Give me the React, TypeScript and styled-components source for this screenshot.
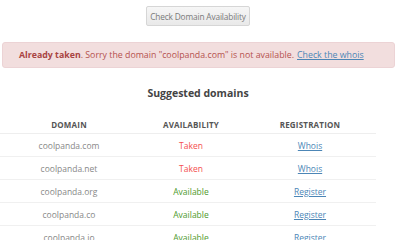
import React from "react";
import styled, { createGlobalStyle } from "styled-components";

const Global = createGlobalStyle`
  html, body { margin: 0; padding: 0; background: #fff; }
  body { font-family: "Open Sans", "Liberation Sans", sans-serif; }
`;

const Page = styled.div`
  width: 400px;
  height: 240px;
  overflow: hidden;
`;

const ButtonRow = styled.div`
  display: flex;
  justify-content: center;
  padding: 6px 6px 0 2px;
`;

const CheckButton = styled.button`
  font-family: inherit;
  font-size: 8.3px;
  letter-spacing: -0.15px;
  color: #7a7a7a;
  height: 20px;
  width: 104px;
  padding: 0;
  border: 1px solid #d6d6d6;
  border-radius: 2px;
  background: linear-gradient(#f6f6f6, #e9e9e9);
`;

const Alert = styled.div`
  margin: 16px 5px 0 2px;
  height: 26px;
  box-sizing: border-box;
  background: #f2dede;
  border: 1px solid #ecd3d5;
  border-radius: 3px;
  color: #b5524f;
  font-size: 8.8px;
  display: flex;
  align-items: center;
  padding-left: 16px;
  white-space: nowrap;
  strong { font-weight: 700; color: #a94442; }
`;

const AlertLink = styled.a`
  color: #4c86b6;
  text-decoration: underline;
  margin-left: 3px;
`;

const Heading = styled.h3`
  margin: 18px 0 0 0;
  padding-right: 4px;
  text-align: center;
  font-size: 10.5px;
  font-weight: 700;
  color: #444;
  line-height: 14px;
`;

const Table = styled.table`
  margin-top: 19px;
  width: 376px;
  border-collapse: collapse;
  table-layout: fixed;
  font-size: 8px;
`;

const Th = styled.th<{ $w: number }>`
  width: ${(p) => p.$w}px;
  font-weight: 700;
  color: #555;
  text-transform: uppercase;
  letter-spacing: 0.2px;
  height: 14px;
  padding: 0;
  vertical-align: top;
  line-height: 12px;
  border-bottom: 1px solid #eee;
  text-align: center;
`;

const Td = styled.td<{ $tone?: "muted" | "taken" | "ok" }>`
  height: 22px;
  padding: 0;
  text-align: center;
  border-bottom: 1px solid #f0f0f0;
  font-size: 8.5px;
  color: ${(p) =>
    p.$tone === "taken" ? "#f45050" : p.$tone === "ok" ? "#4e9a2e" : "#888"};
`;

const CellLink = styled.a`
  color: #4c86b6;
  text-decoration: underline;
`;

const rows = [
  { d: "coolpanda.com", taken: true },
  { d: "coolpanda.net", taken: true },
  { d: "coolpanda.org", taken: false },
  { d: "coolpanda.co", taken: false },
  { d: "coolpanda.io", taken: false },
];

export default function App() {
  return (
    <Page>
      <Global />
      <ButtonRow>
        <CheckButton>Check Domain Availability</CheckButton>
      </ButtonRow>
      <Alert>
        <strong>Already taken</strong>. Sorry the domain "coolpanda.com" is not available.
        <AlertLink href="#">Check the whois</AlertLink>
      </Alert>
      <Heading>Suggested domains</Heading>
      <Table>
        <thead>
          <tr>
            <Th $w={138}>Domain</Th>
            <Th $w={106}>Availability</Th>
            <Th $w={132}>Registration</Th>
          </tr>
        </thead>
        <tbody>
          {rows.map((r) => (
            <tr key={r.d}>
              <Td $tone="muted">{r.d}</Td>
              <Td $tone={r.taken ? "taken" : "ok"}>{r.taken ? "Taken" : "Available"}</Td>
              <Td>
                <CellLink href="#">{r.taken ? "Whois" : "Register"}</CellLink>
              </Td>
            </tr>
          ))}
        </tbody>
      </Table>
    </Page>
  );
}
